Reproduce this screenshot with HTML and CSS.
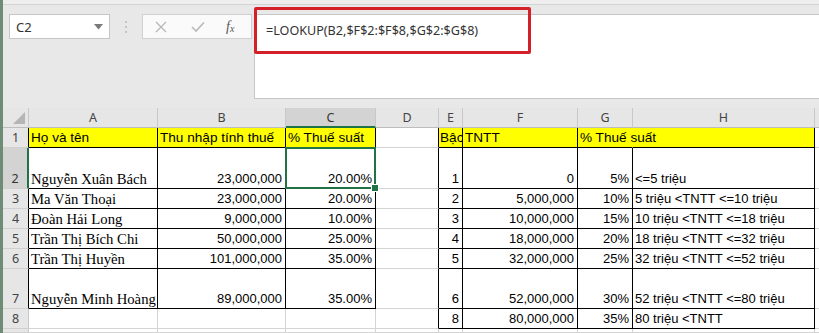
FILE: index.html
```html
<!DOCTYPE html>
<html lang="vi">
<head>
<meta charset="utf-8">
<link rel="stylesheet" href="styles.css">
</head>
<body>
<div class="app">
  <div class="topstrip"></div>
  <div class="fbar">
    <div class="namebox"><span class="nb-text">C2</span><svg class="nb-arrow" width="9" height="6" viewBox="0 0 9 6"><path d="M0 0 H9 L4.5 5.5 Z" fill="#7a7a7a"/></svg></div>
    <div class="sep"><i></i><i></i><i></i></div>
    <div class="btns">
      <svg class="ic" width="12" height="12" viewBox="0 0 12 12"><path d="M1 1 L11 11 M11 1 L1 11" stroke="#b9b9b9" stroke-width="1.4" fill="none"/></svg>
      <svg class="ic" width="14" height="12" viewBox="0 0 14 12"><path d="M1 6 L5 10 L13 1.5" stroke="#b9b9b9" stroke-width="1.6" fill="none"/></svg>
      <span class="fx">f<sub>x</sub></span>
    </div>
    <div class="formula">
      <span class="ftext">=LOOKUP(B2,$F$2:$F$8,$G$2:$G$8)</span>
      <div class="redbox"></div>
    </div>
  </div>
  <div class="sheet">
    <div class="corner"><svg width="12" height="12" viewBox="0 0 12 12"><path d="M12 0 V12 H0 Z" fill="#b5b5b5"/></svg></div>
    <div class="hd">A</div><div class="hd">B</div><div class="hd selh">C</div><div class="hd">D</div><div class="hd">E</div><div class="hd">F</div><div class="hd">G</div><div class="hd">H</div><div class="hd last"></div>

    <div class="rh rb">1</div>
    <div class="c y bk t">Họ và tên</div>
    <div class="c y bk t">Thu nhập tính thuế</div>
    <div class="c y bk t">% Thuế suất</div>
    <div class="c rbk"></div>
    <div class="c y bk t clip">Bậc</div>
    <div class="c y bk t">TNTT</div>
    <div class="c y bbk t over">% Thuế suất</div>
    <div class="c y bk"></div>
    <div class="c"></div>

    <div class="rh selr">2</div>
    <div class="c bk s">Nguyễn Xuân Bách</div>
    <div class="c bk r">23,000,000</div>
    <div class="c bk r selcell">20.00%</div>
    <div class="c rbk"></div>
    <div class="c bk r">1</div>
    <div class="c bk r">0</div>
    <div class="c bk r">5%</div>
    <div class="c bk">&lt;=5 triệu</div>
    <div class="c"></div>

    <div class="rh rb">3</div>
    <div class="c bk s">Ma Văn Thoại</div>
    <div class="c bk r">23,000,000</div>
    <div class="c bk r">20.00%</div>
    <div class="c rbk"></div>
    <div class="c bk r">2</div>
    <div class="c bk r">5,000,000</div>
    <div class="c bk r">10%</div>
    <div class="c bk">5 triệu &lt;TNTT &lt;=10 triệu</div>
    <div class="c"></div>

    <div class="rh rb">4</div>
    <div class="c bk s">Đoàn Hải Long</div>
    <div class="c bk r">9,000,000</div>
    <div class="c bk r">10.00%</div>
    <div class="c rbk"></div>
    <div class="c bk r">3</div>
    <div class="c bk r">10,000,000</div>
    <div class="c bk r">15%</div>
    <div class="c bk">10 triệu &lt;TNTT &lt;=18 triệu</div>
    <div class="c"></div>

    <div class="rh rb">5</div>
    <div class="c bk s">Trần Thị Bích Chi</div>
    <div class="c bk r">50,000,000</div>
    <div class="c bk r">25.00%</div>
    <div class="c rbk"></div>
    <div class="c bk r">4</div>
    <div class="c bk r">18,000,000</div>
    <div class="c bk r">20%</div>
    <div class="c bk">18 triệu &lt;TNTT &lt;=32 triệu</div>
    <div class="c"></div>

    <div class="rh rb">6</div>
    <div class="c bk s">Trần Thị Huyền</div>
    <div class="c bk r">101,000,000</div>
    <div class="c bk r">35.00%</div>
    <div class="c rbk"></div>
    <div class="c bk r">5</div>
    <div class="c bk r">32,000,000</div>
    <div class="c bk r">25%</div>
    <div class="c bk">32 triệu &lt;TNTT &lt;=52 triệu</div>
    <div class="c"></div>

    <div class="rh rb">7</div>
    <div class="c bk s">Nguyễn Minh Hoàng</div>
    <div class="c bk r">89,000,000</div>
    <div class="c bk r">35.00%</div>
    <div class="c rbk"></div>
    <div class="c bk r">6</div>
    <div class="c bk r">52,000,000</div>
    <div class="c bk r">30%</div>
    <div class="c bk">52 triệu &lt;TNTT &lt;=80 triệu</div>
    <div class="c"></div>

    <div class="rh">8</div>
    <div class="c"></div>
    <div class="c"></div>
    <div class="c"></div>
    <div class="c rbk"></div>
    <div class="c bk r">8</div>
    <div class="c bk r">80,000,000</div>
    <div class="c bk r">35%</div>
    <div class="c bk">80 triệu &lt;TNTT</div>
    <div class="c"></div>

    <div class="rh"></div>
    <div class="c"></div><div class="c"></div><div class="c"></div><div class="c"></div><div class="c"></div><div class="c"></div><div class="c"></div><div class="c"></div><div class="c"></div>
  </div>
</div>
</body>
</html>
```

FILE: styles.css
```css
* { box-sizing: border-box; }
html, body { margin: 0; padding: 0; }
body { background: #e6e6e6; }

.app {
  width: 819px;
  height: 333px;
  overflow: hidden;
  background: #e8e8e8;
  border-left: 3px solid #6e8b76;
  display: flex;
  flex-direction: column;
  font-family: "Noto Sans", "Liberation Sans", sans-serif;
}

.topstrip {
  height: 5px;
  flex: none;
  background: #eeeeee;
  border-bottom: 1px solid #d3d3d3;
}

.fbar {
  height: 103px;
  flex: none;
  display: flex;
  align-items: flex-start;
  padding: 9px 0 0 6px;
}

.namebox {
  width: 101px;
  height: 25px;
  background: #fff;
  border: 1px solid #c6c6c6;
  display: flex;
  align-items: center;
  justify-content: space-between;
  padding: 0 6px 0 6px;
  font-size: 13px;
  color: #333;
}
.nb-arrow { margin-top: 1px; }

.sep {
  width: 32px;
  height: 25px;
  display: flex;
  flex-direction: column;
  align-items: center;
  justify-content: center;
  gap: 3px;
}
.sep i {
  display: block;
  width: 2px;
  height: 2px;
  background: #c4c4c4;
}

.btns {
  width: 110px;
  height: 25px;
  background: #fafafa;
  border: 1px solid #d0d0d0;
  display: flex;
  align-items: center;
  padding-left: 12px;
}
.btns .ic:first-child { margin-right: 24px; }
.btns .ic:nth-child(2) { margin-right: 21px; }
.fx {
  font-family: "Liberation Serif", serif;
  font-style: italic;
  font-size: 14px;
  color: #555;
  line-height: 1;
}
.fx sub { font-size: 10px; vertical-align: -1px; }

.formula {
  position: relative;
  margin-left: 2px;
  flex: 1;
  height: 85px;
  background: #fff;
  border: 1px solid #c6c6c6;
  border-right: none;
  padding: 3px 0 0 11px;
}
.ftext {
  font-size: 12.6px;
  color: #333;
}
.redbox {
  position: absolute;
  left: -1px;
  top: -8px;
  width: 277px;
  height: 47px;
  border: 3px solid #d42029;
  border-radius: 2px;
}

.sheet {
  flex: 1;
  display: grid;
  grid-template-columns: 26px 129px 128px 90px 63px 24px 115px 55px 182px 1fr;
  grid-template-rows: 20px 20px 41px 20px 20px 20px 20px 40px 20px 1fr;
  background: #fff;
}

.corner {
  background: #e6e6e6;
  border-right: 1px solid #c8c8c8;
  border-bottom: 1px solid #bdbdbd;
  display: flex;
  align-items: flex-end;
  justify-content: flex-end;
  padding: 0 3px 3px 0;
}

.hd {
  background: #e6e6e6;
  border-right: 1px solid #c8c8c8;
  border-bottom: 1px solid #bdbdbd;
  display: flex;
  align-items: center;
  justify-content: center;
  font-size: 12.5px;
  color: #444;
}
.hd.selh {
  background: #d3d3d3;
  border-bottom: 2px solid #217346;
  color: #333;
}

.rh {
  background: #e6e6e6;
  border-right: 1px solid #c8c8c8;
  border-bottom: 1px solid #d0d0d0;
  display: flex;
  align-items: flex-end;
  justify-content: center;
  padding-bottom: 1px;
  font-size: 12.5px;
  color: #444;
}
.rh.rb { border-right-color: #000; }
.rh.selr {
  background: #d3d3d3;
  border-right: 2px solid #217346;
  color: #333;
}

.c {
  position: relative;
  border-right: 1px solid #d4d4d4;
  border-bottom: 1px solid #d4d4d4;
  display: flex;
  align-items: flex-end;
  padding: 0 2px 1px 2px;
  font-family: "Liberation Sans", Arial, sans-serif;
  font-size: 13px;
  line-height: 16px;
  color: #000;
  white-space: nowrap;
  overflow: hidden;
}
.c.t { font-size: 13.6px; }
.c.s {
  font-family: "Liberation Serif", "Times New Roman", serif;
  font-size: 14.7px;
  line-height: 17px;
  padding-bottom: 0;
}
.c.r { justify-content: flex-end; padding-right: 3px; }
.c.y { background: #ffff00; }
.c.bk { border-right-color: #000; border-bottom-color: #000; }
.c.rbk { border-right-color: #000; }
.c.bbk { border-bottom-color: #000; border-right-color: #ffff00; }
.c.clip { padding-left: 1px; }
.c.over { overflow: visible; z-index: 2; }

.selcell { overflow: visible; }
.selcell::after {
  content: "";
  position: absolute;
  left: -1px;
  top: -1px;
  right: -1px;
  bottom: -1px;
  border: 2px solid #217346;
}
.selcell::before {
  content: "";
  position: absolute;
  right: -4px;
  bottom: -4px;
  width: 6px;
  height: 6px;
  background: #217346;
  border: 1px solid #fff;
  z-index: 3;
}
```
